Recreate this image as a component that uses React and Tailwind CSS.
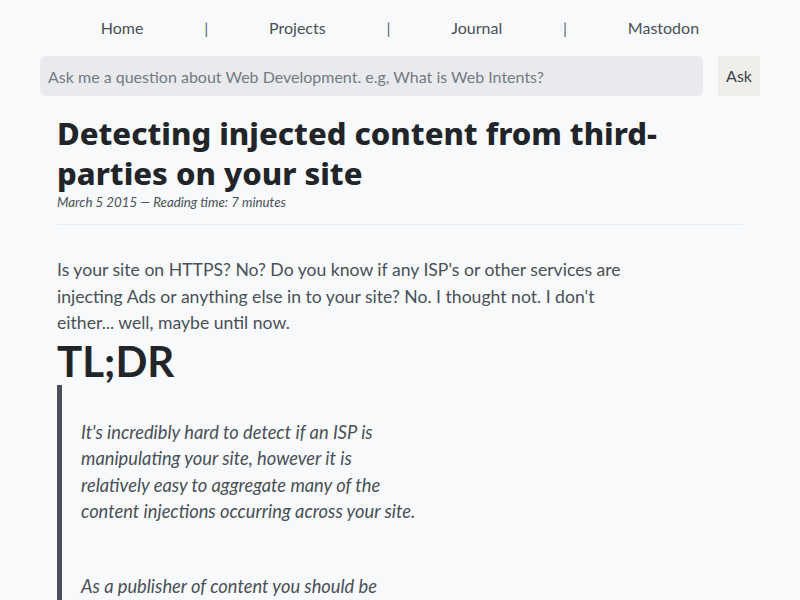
const links = ['Home', 'Projects', 'Journal', 'Mastodon'];

export default function App() {
  return (
    <div className="min-h-screen bg-[#f8f9fa] font-['Lato',sans-serif] text-[#495057]">
      {/* top nav */}
      <nav className="px-10 pt-4">
        <ul className="flex justify-evenly text-[16px] leading-6 text-[#495057]">
          {links.map((l, i) => (
            <li key={l} className="contents">
              {i > 0 && <span className="text-[#5a6472]">|</span>}
              <a href="#">{l}</a>
            </li>
          ))}
        </ul>
      </nav>

      {/* ask box */}
      <form className="mx-10 mt-4 flex gap-[15px]" onSubmit={(e) => e.preventDefault()}>
        <input
          type="text"
          placeholder="Ask me a question about Web Development. e.g, What is Web Intents?"
          className="h-10 flex-1 rounded-md bg-[#e9eaee] px-2 text-[16px] text-[#495057] placeholder:text-[#737a82] outline-none"
        />
        <button className="h-10 w-[42px] bg-[#f0eeea] text-[16px] text-[#3d4148]">Ask</button>
      </form>

      {/* article */}
      <article className="mx-10 mt-[17px] px-[17px]">
        <h1 className="font-['Noto_Sans',sans-serif] text-[31px] font-extrabold leading-10 text-[#212529]">
          Detecting injected content from third-parties on your site
        </h1>
        <p className="text-[13.3px] italic leading-[18px] text-[#495057]">
          March 5 2015 — Reading time: 7 minutes
        </p>
        <hr className="mt-[13px] border-[#e9ecef]" />

        <p className="mt-8 max-w-[580px] text-[17.6px] leading-[26.5px]">
          Is your site on HTTPS? No? Do you know if any ISP's or other services are injecting Ads or anything else in to your site? No. I thought not. I don't either... well, maybe until now.
        </p>

        <h2 className="text-[42px] font-bold leading-[48px] text-[#212529]">TL;DR</h2>

        <blockquote className="border-l-[5px] border-[#495057] pl-[19px] pt-[34px] pb-4 italic text-[18.3px] leading-[26.5px]">
          <p className="max-w-[340px]">
            It's incredibly hard to detect if an ISP is manipulating your site, however it is relatively easy to aggregate many of the content injections occurring across your site.
          </p>
          <p className="mt-12 max-w-[340px]">
            As a publisher of content you should be aware of what is happening to the pages you serve to your users.
          </p>
        </blockquote>
      </article>
    </div>
  );
}
